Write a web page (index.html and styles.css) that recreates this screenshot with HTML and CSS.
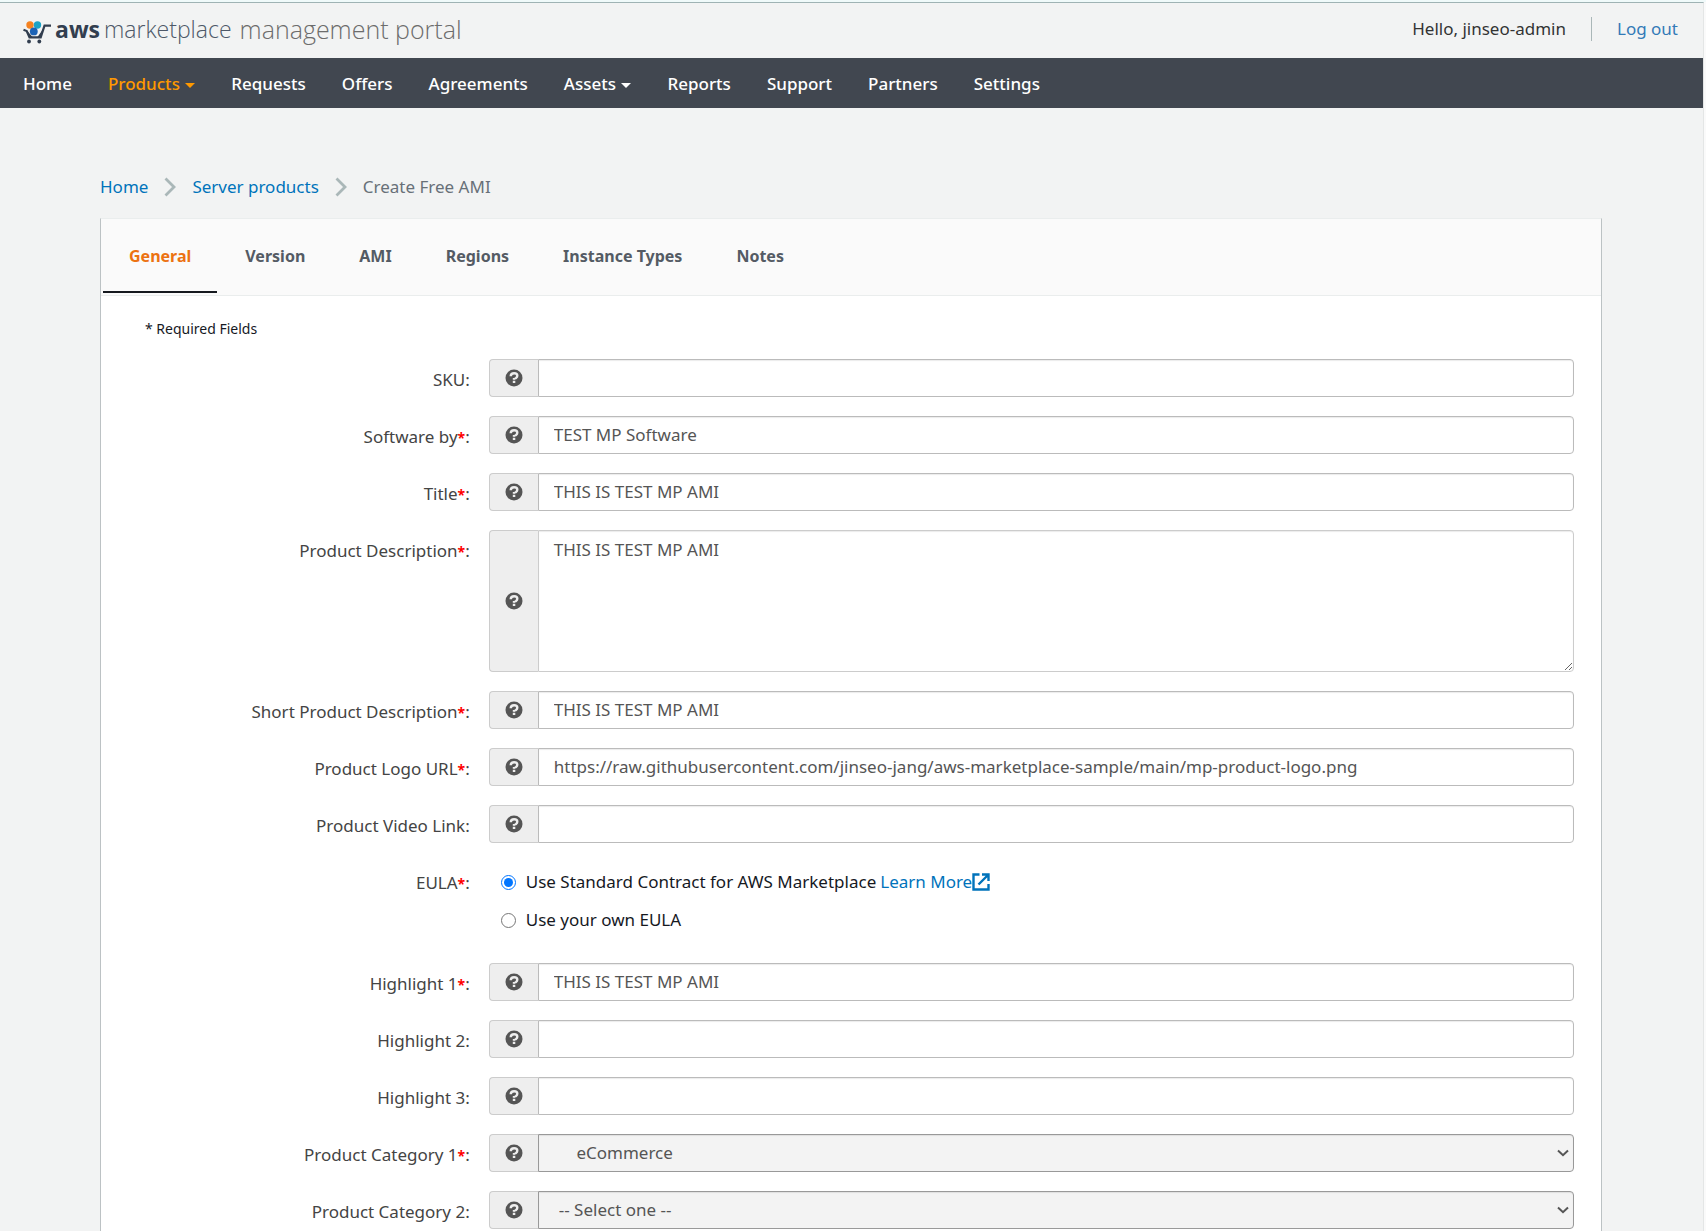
FILE: index.html
```html
<!DOCTYPE html>
<html lang="en">
<head>
    <meta charset="UTF-8">
    <meta name="viewport" content="width=device-width, initial-scale=1.0">
    <title>AWS Marketplace Management Portal</title>
    <link rel="stylesheet" href="styles.css">
</head>
<body>
<svg class="sprite" aria-hidden="true">
    <symbol id="help" viewBox="0 0 18 18">
        <circle cx="9" cy="9" r="8.5" fill="#555"/>
        <path d="M5.700 7.200C5.800 5.200 7.200 4.300 9.100 4.300c1.900 0 3.200 1 3.200 2.500 0 1.200-.6 1.700-1.300 2.200-.6.400-.9.600-.9 1.200" fill="none" stroke="#eee" stroke-width="2.400"/>
        <path d="M7.800 9h2.500v1.800H7.800zM7.800 11.700h2.500v2.400H7.800z" fill="#eee"/>
    </symbol>
    <symbol id="chevron" viewBox="0 0 12 20">
        <path d="M1.500 1.500 10 10l-8.500 8.500" fill="none" stroke="#aab7b8" stroke-width="2.800"/>
    </symbol>
    <symbol id="arrow" viewBox="0 0 12 8">
        <path d="M1 1.500l5 4.700 5-4.700" fill="none" stroke="#555" stroke-width="2"/>
    </symbol>
</svg>

<div id="page">
    <header>
        <a class="logo" href="#">
            <svg width="28" height="30" viewBox="0 0 28 30">
                <path d="M.5 15.800l3.200 1.200 2.800 6.300h11.200l3.800-11.600H28" fill="none" stroke="#323e4f" stroke-width="2.200"/>
                <path d="M3.500 16l3 7h3zM14.500 23h3l3-8.500z" fill="#323e4f"/>
                <circle cx="7" cy="11" r="3.700" fill="#f58220"/>
                <circle cx="14.500" cy="11" r="3.700" fill="#1ba3c6"/>
                <circle cx="10.800" cy="17.400" r="3.900" fill="#1b62b5"/>
                <circle cx="6" cy="27.500" r="1.900" fill="#323e4f"/>
                <circle cx="16.300" cy="27.500" r="1.900" fill="#323e4f"/>
            </svg>
            <b>aws</b>
            <span class="market">marketplace</span>
            <span class="portal">management portal</span>
        </a>
        <div class="user">
            <span>Hello, jinseo-admin</span>
            <a href="#">Log out</a>
        </div>
    </header>

    <nav id="menu">
        <a href="#">Home</a>
        <a href="#" class="active">Products <i class="caret"></i></a>
        <a href="#">Requests</a>
        <a href="#">Offers</a>
        <a href="#">Agreements</a>
        <a href="#">Assets <i class="caret"></i></a>
        <a href="#">Reports</a>
        <a href="#">Support</a>
        <a href="#">Partners</a>
        <a href="#">Settings</a>
    </nav>

    <main>
        <div class="breadcrumb">
            <a href="#">Home</a>
            <svg width="12" height="20"><use href="#chevron"/></svg>
            <a href="#">Server products</a>
            <svg width="12" height="20"><use href="#chevron"/></svg>
            <span>Create Free AMI</span>
        </div>

        <div id="card">
            <div id="tabs">
                <button type="button" class="tab selected">General</button>
                <button type="button" class="tab">Version</button>
                <button type="button" class="tab">AMI</button>
                <button type="button" class="tab">Regions</button>
                <button type="button" class="tab">Instance Types</button>
                <button type="button" class="tab">Notes</button>
            </div>

            <p class="note">* Required Fields</p>

            <form>
                <div class="row">
                    <label for="sku">SKU:</label>
                    <div class="group">
                        <span class="addon"><svg width="18" height="18"><use href="#help"/></svg></span>
                        <input id="sku" type="text">
                    </div>
                </div>
                <div class="row">
                    <label for="by">Software by<em>*</em>:</label>
                    <div class="group">
                        <span class="addon"><svg width="18" height="18"><use href="#help"/></svg></span>
                        <input id="by" type="text" value="TEST MP Software">
                    </div>
                </div>
                <div class="row">
                    <label for="title">Title<em>*</em>:</label>
                    <div class="group">
                        <span class="addon"><svg width="18" height="18"><use href="#help"/></svg></span>
                        <input id="title" type="text" value="THIS IS TEST MP AMI">
                    </div>
                </div>
                <div class="row">
                    <label for="desc">Product Description<em>*</em>:</label>
                    <div class="group">
                        <span class="addon"><svg width="18" height="18"><use href="#help"/></svg></span>
                        <textarea id="desc">THIS IS TEST MP AMI</textarea>
                    </div>
                </div>
                <div class="row">
                    <label for="short">Short Product Description<em>*</em>:</label>
                    <div class="group">
                        <span class="addon"><svg width="18" height="18"><use href="#help"/></svg></span>
                        <input id="short" type="text" value="THIS IS TEST MP AMI">
                    </div>
                </div>
                <div class="row">
                    <label for="logo">Product Logo URL<em>*</em>:</label>
                    <div class="group">
                        <span class="addon"><svg width="18" height="18"><use href="#help"/></svg></span>
                        <input id="logo" type="text" value="https://raw.githubusercontent.com/jinseo-jang/aws-marketplace-sample/main/mp-product-logo.png">
                    </div>
                </div>
                <div class="row">
                    <label for="video">Product Video Link:</label>
                    <div class="group">
                        <span class="addon"><svg width="18" height="18"><use href="#help"/></svg></span>
                        <input id="video" type="text">
                    </div>
                </div>
                <div class="row eula" role="radiogroup" aria-labelledby="eula">
                    <span id="eula" class="label">EULA<em>*</em>:</span>
                    <div class="options">
                        <div class="option">
                            <input id="standard" type="radio" name="eula" checked>
                            <label for="standard">Use Standard Contract for AWS Marketplace</label>
                            <a href="#">Learn More<svg width="18" height="18" viewBox="0 0 18 18" fill="none" stroke="currentColor" stroke-width="2.400"><path d="M7.500 1.500h-6v15h15V11M10 1.500h6.500V8M16 2 6.500 11.500"/></svg></a>
                        </div>
                        <div class="option">
                            <input id="own" type="radio" name="eula">
                            <label for="own">Use your own EULA</label>
                        </div>
                    </div>
                </div>
                <div class="row">
                    <label for="h1">Highlight 1<em>*</em>:</label>
                    <div class="group">
                        <span class="addon"><svg width="18" height="18"><use href="#help"/></svg></span>
                        <input id="h1" type="text" value="THIS IS TEST MP AMI">
                    </div>
                </div>
                <div class="row">
                    <label for="h2">Highlight 2:</label>
                    <div class="group">
                        <span class="addon"><svg width="18" height="18"><use href="#help"/></svg></span>
                        <input id="h2" type="text">
                    </div>
                </div>
                <div class="row">
                    <label for="h3">Highlight 3:</label>
                    <div class="group">
                        <span class="addon"><svg width="18" height="18"><use href="#help"/></svg></span>
                        <input id="h3" type="text">
                    </div>
                </div>
                <div class="row">
                    <label for="cat1">Product Category 1<em>*</em>:</label>
                    <div class="group">
                        <span class="addon"><svg width="18" height="18"><use href="#help"/></svg></span>
                        <select id="cat1">
                            <option>&nbsp;&nbsp;&nbsp;&nbsp;eCommerce</option>
                        </select>
                        <svg class="arrow" width="12" height="8"><use href="#arrow"/></svg>
                    </div>
                </div>
                <div class="row">
                    <label for="cat2">Product Category 2:</label>
                    <div class="group">
                        <span class="addon"><svg width="18" height="18"><use href="#help"/></svg></span>
                        <select id="cat2">
                            <option>-- Select one --</option>
                        </select>
                        <svg class="arrow" width="12" height="8"><use href="#arrow"/></svg>
                    </div>
                </div>
            </form>
        </div>
    </main>
</div>
</body>
</html>
```
FILE: styles.css
```css
* {
    box-sizing: border-box;
    margin: 0;
    padding: 0;
}
body {
    background: #fafafa;
    font-family: "Noto Sans", "Open Sans", sans-serif;
    font-size: 17px;
    line-height: 24px;
    color: #16191f;
    border-top: 2px solid #f0fafa;
}
a {
    color: #0073bb;
    text-decoration: none;
}
.sprite {
    display: none;
}
#page {
    background: #f2f3f3;
    margin-right: 2px;
    border-top: 1px solid #9fb3b4;
    border-right: 1px solid #e4e6e6;
}

/* header */
header {
    display: flex;
    justify-content: space-between;
    align-items: center;
    height: 55px;
    padding: 0 25px 4px 23px;
}
.logo {
    display: flex;
    align-items: center;
    font-family: "Open Sans", "Noto Sans", sans-serif;
    font-size: 23px;
    color: #323e4f;
}
.logo b {
    margin-left: 4px;
}
.logo .market {
    margin-left: 4px;
    color: #4d5868;
    font-weight: 300;
}
.logo .portal {
    margin-left: 8px;
    font-size: 25px;
    font-weight: 300;
    color: #6c6c6c;
}
.user {
    display: flex;
    color: #333;
}
.user a {
    margin-left: 25px;
    padding-left: 25px;
    border-left: 1px solid #aab7b8;
    color: #337ab7;
}

/* menu */
#menu {
    display: flex;
    gap: 36px;
    height: 50px;
    padding: 2px 23px 0;
    align-items: center;
    background: #414750;
}
#menu a {
    font-weight: 500;
    color: #fff;
}
#menu .active {
    color: #ff9900;
}
.caret {
    display: inline-block;
    margin-left: 1px;
    vertical-align: middle;
    border-top: 5px solid;
    border-left: 5px solid transparent;
    border-right: 5px solid transparent;
}

main {
    padding: 67px 101px 0 100px;
}
.breadcrumb {
    display: flex;
    align-items: center;
    gap: 16px;
    color: #687078;
}

#card {
    margin-top: 19px;
    padding-bottom: 18px;
    background: #fff;
    border: 1px solid #bcc2c4;
    border-top-color: #eaeded;
    border-bottom: 0;
}
#tabs {
    display: flex;
    gap: 2px;
    height: 77px;
    padding: 0 2px 2px;
    background: #fafafa;
    border-bottom: 1px solid #eaeded;
}
.tab {
    padding: 2px 26px 0;
    border: 0;
    border-bottom: 2px solid transparent;
    background: none;
    font: bold 16px "Noto Sans", sans-serif;
    color: #545b64;
}
.selected {
    color: #ec7211;
    border-color: #16191f;
}
.note {
    padding: 21px 44px 18px;
    font-size: 14px;
}

/* form */
form {
    padding: 0 27px 0 7px;
}
.row {
    display: grid;
    grid-template-columns: 1fr 3fr;
    column-gap: 19px;
    margin-bottom: 19px;
    color: #444;
}
.row > label, .label {
    padding-top: 9px;
    text-align: right;
}
.row > label {
    height: 38px;
}
em {
    font-style: normal;
    font-weight: bold;
    font-size: 14px;
    color: #f00;
}
.group {
    display: flex;
    position: relative;
}
.addon {
    display: flex;
    align-items: center;
    justify-content: center;
    width: 49px;
    background: #eee;
    border: 1px solid #ccc;
    border-right: 0;
    border-radius: 4px 0 0 4px;
}
.group input, .group textarea, .group select {
    flex: 1;
    min-width: 0;
    height: 38px;
    padding: 0 15px 2px;
    border: 1px solid #bbb;
    border-radius: 0 4px 4px 0;
    background: #fff;
    box-shadow: inset 0 1px 1px rgba(0, 0, 0, 0.08);
    font: 17px/24px "Noto Sans", sans-serif;
    color: #555;
}
.group textarea {
    height: 142px;
    padding-top: 7px;
    border-color: #ccc;
}
.group select {
    appearance: none;
    padding: 0 20px;
    border-color: #999;
    background: #f3f3f3;
}
.arrow {
    position: absolute;
    top: 15px;
    right: 5px;
    pointer-events: none;
}
.eula {
    margin-bottom: 11px;
}
.options {
    padding: 8px 0 6px 12px;
}
.option {
    display: flex;
    align-items: center;
    margin-bottom: 14px;
    color: #16191f;
}
.option input {
    width: 15px;
    height: 15px;
    margin-right: 10px;
    accent-color: #0075ff;
}
.option a {
    display: flex;
    align-items: center;
    margin-left: 4px;
}
```
